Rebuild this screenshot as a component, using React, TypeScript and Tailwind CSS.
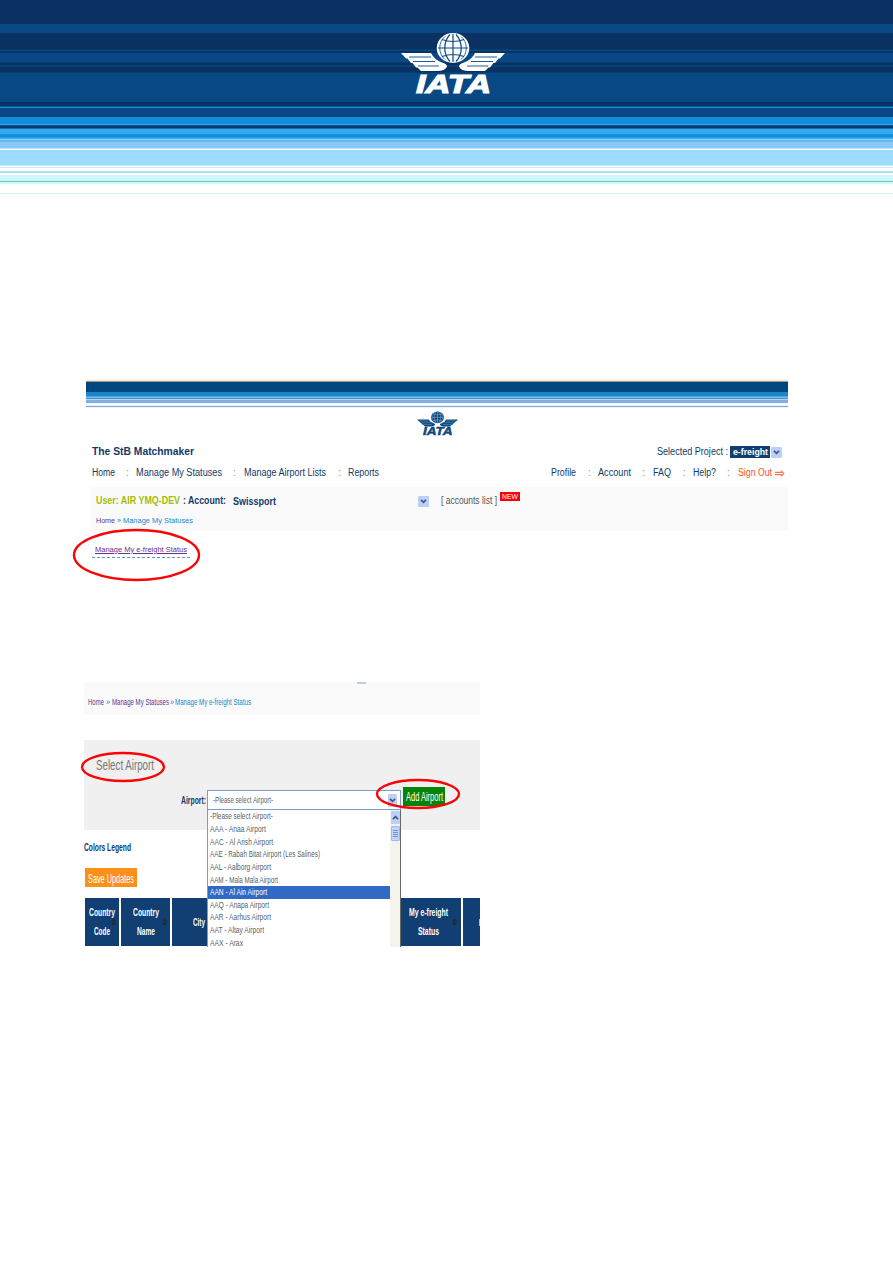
import { useLayoutEffect, useRef, type ReactNode } from "react";

/** Text squeezed or stretched horizontally to the width of its box. */
function Fit({ className = "", inner = "", children }: { className?: string; inner?: string; children: ReactNode }) {
  const box = useRef<HTMLSpanElement>(null);
  const text = useRef<HTMLSpanElement>(null);
  useLayoutEffect(() => {
    const b = box.current;
    const t = text.current;
    if (!b || !t) return;
    t.style.transform = "none";
    const natural = t.getBoundingClientRect().width;
    t.style.transform = `scaleX(${b.clientWidth / natural})`;
  }, []);
  return (
    <span ref={box} className={`block shrink-0 whitespace-nowrap ${className}`}>
      <span ref={text} className={`inline-block origin-left ${inner}`}>
        {children}
      </span>
    </span>
  );
}

function Logo({ className, ink, ground }: { className: string; ink: string; ground: string }) {
  return (
    <svg viewBox="0 0 104 66" className={className} aria-label="IATA">
      <path
        fill={ink}
        d="M0 20H30Q33 26.5 41 29.5Q46 31 46 33.5Q44 38 36 38H20L16.5 34.5H15L11.5 30H10L6.5 25.5H5ZM104 20H74Q71 26.5 63 29.5Q58 31 58 33.5Q60 38 68 38H84L87.5 34.5H89L92.5 30H94L97.5 25.5H99Z"
      />
      <path
        fill="none"
        stroke={ground}
        strokeWidth="0.9"
        d="M8 24H30M12 28.5H34M17 33H38M96 24H74M92 28.5H70M87 33H66"
      />
      <ellipse cx="52" cy="15" rx="16.3" ry="15" fill={ink} />
      <path
        fill="none"
        stroke={ground}
        strokeWidth="1.2"
        d="M52 1V29M37 15H67M41 6.5Q52 10.5 63 6.5M41 23.5Q52 19.5 63 23.5M49 1.5C42 9 42 21 49 28.5M55 1.5C62 9 62 21 55 28.5"
      />
      <path
        fill="none"
        stroke={ground}
        strokeWidth="0.8"
        d="M44 3.5C37 9 37 21 44 26.5M60 3.5C67 9 67 21 60 26.5"
      />
      <text
        x="15"
        y="60"
        textLength="75"
        lengthAdjust="spacingAndGlyphs"
        fill={ink}
        stroke={ink}
        strokeWidth="1.2"
        fontFamily="Liberation Sans, sans-serif"
        fontWeight="700"
        fontStyle="italic"
        fontSize="26"
      >
        IATA
      </text>
    </svg>
  );
}

function Chevron({ className, up = false }: { className: string; up?: boolean }) {
  return (
    <span className={`flex shrink-0 items-center justify-center rounded-[1px] bg-[#bccffa] ${className}`}>
      <svg viewBox="0 0 8 6" className="h-[5px] w-[7px]">
        <path d={up ? "M1 5L4 2L7 5" : "M1 1L4 4L7 1"} fill="none" stroke="#41567e" strokeWidth="2" />
      </svg>
    </span>
  );
}

function Ring({ className, rx, ry }: { className: string; rx: number; ry: number }) {
  return (
    <svg viewBox={`${-rx - 2} ${-ry - 2} ${2 * rx + 4} ${2 * ry + 4}`} className={`absolute ${className}`}>
      <ellipse rx={rx} ry={ry} fill="none" stroke="#fa0505" strokeWidth="2.4" />
    </svg>
  );
}

function Sort({ className }: { className: string }) {
  return (
    <svg viewBox="0 0 5 8" className={`absolute h-[8px] w-[5px] ${className}`}>
      <path d="M0 3.4L2.5 0L5 3.4ZM0 4.6H5L2.5 8Z" fill="#26282c" />
    </svg>
  );
}

const bannerStripes = [
  "h-[24px] bg-[#093161]",
  "h-[9px] bg-[#084985]",
  "h-[16px] bg-[#093161]",
  "h-px bg-[#083c70]",
  "h-px bg-[#084985]",
  "h-[2px] bg-[#093362]",
  "h-[9px] bg-[#084985]",
  "h-px bg-[#083c70]",
  "h-[2px] bg-[#093161]",
  "h-[2px] bg-[#0a4177]",
  "h-[5px] bg-[#093161]",
  "h-px bg-[#083c70]",
  "h-[29px] bg-[#084985]",
  "h-[4px] bg-[#093161]",
  "h-px bg-[#075494]",
  "h-px bg-[#168fdf]",
  "h-[9px] bg-[#084985]",
  "h-[7px] bg-[#148dde]",
  "h-px bg-[#34a5ea]",
  "h-px bg-[#0a5793]",
  "h-[2px] bg-[#083c70]",
  "h-px bg-[#176daf]",
  "h-[5px] bg-[#37a9f2]",
  "h-[3px] bg-[#148ddf]",
  "h-px bg-[#1b98e2]",
  "h-px bg-[#45b3ec]",
  "h-px bg-[#82cff4]",
  "h-[2px] bg-[#63b7f1]",
  "h-[6px] bg-[#86c9fc]",
  "h-px bg-[#bbe5fe]",
  "h-px bg-[#f5fdff]",
  "h-[15px] bg-[#9edcff]",
  "h-px bg-[#c3edfa]",
  "h-px bg-white",
  "h-px bg-[#c9edf6]",
  "h-[3px] bg-white",
  "h-[2px] bg-[#addff5]",
  "h-[2px] bg-white",
  "h-[6px] bg-[#cbf6fc]",
  "h-px bg-[#77bdc8]",
  "h-[2px] bg-[#cbfcf7]",
  "h-[9px] bg-white",
  "h-px bg-[#c9f2f3]",
];

const siteStripes = [
  "h-px bg-[#f8f6e4]",
  "h-px bg-[#f0ecd8]",
  "h-px bg-[#9b9a8d]",
  "h-[10px] bg-[#00467f]",
  "h-[4px] bg-[#1c86cb]",
  "h-px bg-[#55a1da]",
  "h-px bg-[#83bce5]",
  "h-px bg-[#3f94d1]",
  "h-px bg-[#b5d4ef]",
  "h-[3px] bg-[#82aee0]",
  "h-px bg-[#f0f5fc]",
  "h-px bg-white",
  "h-px bg-[#e7eef9]",
  "h-px bg-[#78a9dd]",
  "h-px bg-[#edf3fb]",
];

const airports = [
  ["-Please select Airport-", "w-[63px]"],
  ["AAA - Anaa Airport", "w-[56px]"],
  ["AAC - Al Arish Airport", "w-[63px]"],
  ["AAE - Rabah Bitat Airport (Les Salines)", "w-[110px]"],
  ["AAL - Aalborg Airport", "w-[61px]"],
  ["AAM - Mala Mala Airport", "w-[68px]"],
  ["AAN - Al Ain Airport", "w-[57px]"],
  ["AAQ - Anapa Airport", "w-[59px]"],
  ["AAR - Aarhus Airport", "w-[61px]"],
  ["AAT - Altay Airport", "w-[54px]"],
  ["AAX - Arax", "w-[33px]"],
];

function Colon({ className }: { className: string }) {
  return <span className={`w-[3px] shrink-0 text-[#7d9bb8] ${className}`}>:</span>;
}

function StatusesPage() {
  return (
    <section className="relative ml-[86px] h-[213px] w-[702px] text-[10px] leading-[12px] text-[#123a68]">
      {siteStripes.map((s, i) => (
        <div key={i} className={s} />
      ))}
      <div className="flex h-[35px] pt-[2px] pl-[331px]">
        <Logo className="h-[29px] w-[41px]" ink="#0b4a80" ground="#9dbbd4" />
      </div>
      <div className="flex h-[18px] items-center">
        <Fit className="mb-[3px] ml-[6px] w-[102px] text-[11px] font-bold">The StB Matchmaker</Fit>
        <Fit className="ml-[463px] w-[71px]">Selected Project :</Fit>
        <span className="ml-[2px] flex h-[12px] w-[40px] items-center bg-[#123f73] pl-[3px] font-bold text-white">
          <Fit className="w-[35px] text-[9px]">e-freight</Fit>
        </span>
        <Chevron className="ml-px h-[11px] w-[11px]" />
      </div>
      <nav className="flex h-[26px] items-center pb-[2px]">
        <Fit className="ml-[6px] w-[23px]">Home</Fit>
        <Colon className="ml-[11px]" />
        <Fit className="ml-[7px] w-[86px]">Manage My Statuses</Fit>
        <Colon className="ml-[11px]" />
        <Fit className="ml-[8px] w-[82px]">Manage Airport Lists</Fit>
        <Colon className="ml-[12px]" />
        <Fit className="ml-[7px] w-[31px]">Reports</Fit>
        <Fit className="ml-[172px] w-[25px]">Profile</Fit>
        <Colon className="ml-[12px]" />
        <Fit className="ml-[7px] w-[33px]">Account</Fit>
        <Colon className="ml-[11px]" />
        <Fit className="ml-[8px] w-[18px]">FAQ</Fit>
        <Colon className="ml-[12px]" />
        <Fit className="ml-[7px] w-[23px]">Help?</Fit>
        <Colon className="ml-[11px]" />
        <Fit className="ml-[8px] w-[34px] text-[#f4571b]">Sign Out</Fit>
        <svg viewBox="0 0 10 7" className="ml-[3px] h-[7px] w-[10px]">
          <path d="M0 2.3H7.5M0 4.7H7.5M5.8 0.5L9.2 3.5L5.8 6.5" fill="none" stroke="#f4571b" />
        </svg>
      </nav>
      <div className="ml-[5px] h-[44px] bg-[#fafafa]">
        <div className="flex h-[27px] items-center">
          <Fit className="ml-[5px] w-[84px] font-bold text-[#a3bd0b]">User: AIR YMQ-DEV</Fit>
          <Fit className="ml-[3px] w-[43px] font-bold">: Account:</Fit>
          <Fit className="mt-[2px] ml-[7px] w-[43px] font-bold">Swissport</Fit>
          <Chevron className="mt-[2px] ml-[142px] h-[11px] w-[11px]" />
          <Fit className="ml-[12px] w-[56px] text-[#555]">[ accounts list ]</Fit>
          <span className="mb-[8px] ml-[3px] flex h-[9px] w-[20px] items-center bg-[#fb0007] pl-[2px] text-[8px] leading-[9px] text-white">
            <Fit className="w-[16px]">NEW</Fit>
          </span>
        </div>
        <div className="flex h-[13px] items-center text-[8px] text-[#1988ca]">
          <Fit className="ml-[5px] w-[19px] text-[#68318f]">Home</Fit>
          <Fit className="ml-[2px] w-[4px]">»</Fit>
          <Fit className="ml-[2px] w-[70px]">Manage My Statuses</Fit>
        </div>
      </div>
      <div className="ml-[6px] flex h-[27px] w-[98px] items-end border-b border-dashed border-[#5b97c9] pb-px pl-[3px] text-[8px] text-[#68318f]">
        <Fit className="w-[92px]" inner="underline underline-offset-1">Manage My e-freight Status</Fit>
      </div>
      <Ring className="top-[149px] left-[-14px] h-[54px] w-[129px]" rx={62.5} ry={25} />
    </section>
  );
}

function HeadCell({ className, children }: { className: string; children: ReactNode }) {
  return (
    <div className={`relative flex shrink-0 flex-col items-center justify-center bg-[#113f73] leading-[19px] font-bold text-white ${className}`}>
      {children}
    </div>
  );
}

function AirportPage() {
  return (
    <section className="relative ml-[84px] h-[265px] w-[396px] text-[10px] leading-[12px] text-[#123a68]">
      <div className="h-[33px] bg-[#fafafa]">
        <div className="ml-[273px] h-[2px] w-[9px] bg-[#b9cdf5]" />
        <div className="flex h-[36px] items-center text-[9px] text-[#1988ca]">
          <Fit className="ml-[4px] w-[16px] text-[#68318f]">Home</Fit>
          <Fit className="ml-[2px] w-[4px]">»</Fit>
          <Fit className="ml-[2px] w-[57px] text-[#68318f]">Manage My Statuses</Fit>
          <Fit className="ml-px w-[4px]">»</Fit>
          <Fit className="ml-px w-[76px]">Manage My e-freight Status</Fit>
        </div>
      </div>
      <div className="mt-[25px] h-[90px] bg-[#f0f0f0] pt-[16px]">
        <Fit className="ml-[12px] w-[58px] text-[15px] leading-[18px] text-[#777]">Select Airport</Fit>
        <div className="mt-[13px] flex h-[23px] items-start">
          <Fit className="mt-[8px] ml-[97px] w-[25px] font-bold">Airport:</Fit>
          <div className="mt-[3px] ml-px flex h-[20px] w-[194px] items-center border border-[#7a9fc3] bg-white text-[9px] text-[#555f6a]">
            <Fit className="ml-[5px] w-[60px]">-Please select Airport-</Fit>
            <Chevron className="ml-[115px] h-[13px] w-[9px]" />
          </div>
          <div className="ml-[2px] flex h-[19px] w-[42px] items-center bg-[#078307] pt-px pl-[3px] text-[12px] text-white">
            <Fit className="w-[37px]">Add Airport</Fit>
          </div>
        </div>
      </div>
      <div className="flex h-[38px] items-center">
        <Fit className="mb-[3px] w-[47px] font-bold">Colors Legend</Fit>
      </div>
      <div className="ml-px flex h-[19px] w-[52px] items-center bg-[#fd9018] pt-[2px] pl-[3px] text-[13px] text-white">
        <Fit className="w-[46px]">Save Updates</Fit>
      </div>
      <div className="mt-[11px] ml-px flex h-[48px] w-[395px] justify-start gap-[2px]">
        <HeadCell className="w-[34px]">
          <Fit className="w-[26px]">Country</Fit>
          <Fit className="w-[16px]">Code</Fit>
          <Sort className="top-[20px] right-[3px]" />
        </HeadCell>
        <HeadCell className="w-[49px]">
          <Fit className="w-[26px]">Country</Fit>
          <Fit className="w-[18px]">Name</Fit>
          <Sort className="top-[20px] right-[3px]" />
        </HeadCell>
        <HeadCell className="w-[54px]">
          <Fit className="w-[12px]">City</Fit>
        </HeadCell>
        <HeadCell className="ml-[171px] w-[62px]">
          <Fit className="mr-[3px] w-[39px]">My e-freight</Fit>
          <Fit className="mr-[3px] w-[21px]">Status</Fit>
          <Sort className="top-[20px] right-[4px]" />
        </HeadCell>
        <HeadCell className="w-[17px] items-end">
          <span className="h-[7px] w-px bg-[#a7b9cd]" />
        </HeadCell>
      </div>

      <div className="absolute top-[128px] left-[123px] flex h-[137px] w-[194px] overflow-hidden border-r border-l border-r-[#686868] border-l-[#979797] bg-white">
        <ul className="w-[182px] shrink-0 pt-[0.4px] text-[9px] leading-[12.63px] text-[#555f6a]">
          {airports.map(([name, width], i) => (
            <li key={name} className={i === 6 ? "h-[12.63px] bg-[#316ac5] pl-[2px] text-white" : "h-[12.63px] pl-[2px]"}>
              <Fit className={width}>{name}</Fit>
            </li>
          ))}
        </ul>
        <div className="flex w-[10px] flex-col items-center bg-[#f4f4ec] pt-px">
          <Chevron up className="h-[13px] w-[9px]" />
          <div className="mt-[2px] flex h-[15px] w-[9px] flex-col items-center justify-center gap-px rounded-[1px] border border-[#9db9ee] bg-[#c3d4fb]">
            <span className="h-px w-[5px] bg-[#6f95dd]" />
            <span className="h-px w-[5px] bg-[#6f95dd]" />
            <span className="h-px w-[5px] bg-[#6f95dd]" />
            <span className="h-px w-[5px] bg-[#6f95dd]" />
          </div>
        </div>
      </div>
      <Ring className="top-[69px] left-[-4px] h-[32px] w-[86px]" rx={41} ry={14} />
      <Ring className="top-[96px] left-[291px] h-[32px] w-[86px]" rx={41} ry={14} />
    </section>
  );
}

export default function App() {
  return (
    <main className="h-[1263px] w-[893px] overflow-hidden bg-white font-['Liberation_Sans',Arial,sans-serif]">
      <header className="relative">
        {bannerStripes.map((s, i) => (
          <div key={i} className={s} />
        ))}
        <Logo className="absolute top-[33px] left-[401px] h-[66px] w-[104px]" ink="#ffffff" ground="#084985" />
      </header>
      <div className="mt-[185px]">
        <StatusesPage />
      </div>
      <div className="mt-[90px]">
        <AirportPage />
      </div>
    </main>
  );
}
